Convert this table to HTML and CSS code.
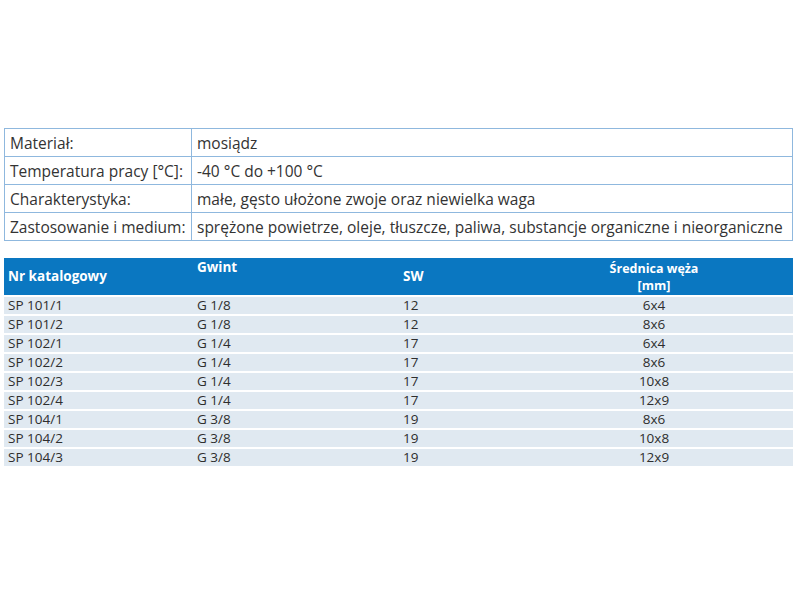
FILE: index.html
```html
<!DOCTYPE html>
<html lang="pl">
<head>
<meta charset="utf-8">
<link rel="stylesheet" href="styles.css">
</head>
<body>
<div class="page">
  <table class="spec">
    <tr><td class="label">Materiał:</td><td>mosiądz</td></tr>
    <tr><td class="label">Temperatura pracy [°C]:</td><td>-40 °C do +100 °C</td></tr>
    <tr><td class="label">Charakterystyka:</td><td>małe, gęsto ułożone zwoje oraz niewielka waga</td></tr>
    <tr><td class="label">Zastosowanie i medium:</td><td>sprężone powietrze, oleje, tłuszcze, paliwa, substancje organiczne i nieorganiczne</td></tr>
  </table>

  <table class="catalog">
    <thead>
      <tr>
        <th class="c1">Nr katalogowy</th>
        <th class="c2 top">Gwint</th>
        <th class="c3">SW</th>
        <th class="c4"><span class="line">Średnica węża</span><span class="line">[mm]</span></th>
      </tr>
    </thead>
    <tbody>
      <tr><td class="c1">SP 101/1</td><td class="c2">G 1/8</td><td class="c3">12</td><td class="c4">6x4</td></tr>
      <tr><td class="c1">SP 101/2</td><td class="c2">G 1/8</td><td class="c3">12</td><td class="c4">8x6</td></tr>
      <tr><td class="c1">SP 102/1</td><td class="c2">G 1/4</td><td class="c3">17</td><td class="c4">6x4</td></tr>
      <tr><td class="c1">SP 102/2</td><td class="c2">G 1/4</td><td class="c3">17</td><td class="c4">8x6</td></tr>
      <tr><td class="c1">SP 102/3</td><td class="c2">G 1/4</td><td class="c3">17</td><td class="c4">10x8</td></tr>
      <tr><td class="c1">SP 102/4</td><td class="c2">G 1/4</td><td class="c3">17</td><td class="c4">12x9</td></tr>
      <tr><td class="c1">SP 104/1</td><td class="c2">G 3/8</td><td class="c3">19</td><td class="c4">8x6</td></tr>
      <tr><td class="c1">SP 104/2</td><td class="c2">G 3/8</td><td class="c3">19</td><td class="c4">10x8</td></tr>
      <tr><td class="c1">SP 104/3</td><td class="c2">G 3/8</td><td class="c3">19</td><td class="c4">12x9</td></tr>
    </tbody>
  </table>
</div>
</body>
</html>
```

FILE: styles.css
```css
html, body {
  margin: 0;
  padding: 0;
  background: #ffffff;
}

body {
  font-family: "Open Sans", "Noto Sans", "Liberation Sans", sans-serif;
  color: #333333;
}

.page {
  padding: 128px 7px 0 4px;
}

table {
  border-collapse: collapse;
  width: 789px;
  table-layout: fixed;
}

.spec {
  border: 1px solid #8fb8de;
  font-size: 15.5px;
}

.spec td {
  border: 1px solid #8fb8de;
  height: 27px;
  padding: 0 5px;
  white-space: nowrap;
  vertical-align: middle;
}

.spec td.label {
  width: 176px;
}

.catalog {
  margin-top: 17px;
  font-size: 13.5px;
}

.catalog thead th {
  background: #0a77c1;
  color: #ffffff;
  font-weight: 700;
  height: 35px;
  padding: 0;
  vertical-align: middle;
  line-height: 15px;
  font-size: 13.5px;
}

.catalog thead th.top {
  vertical-align: top;
  padding-top: 2px;
}

.catalog thead th.c4 {
  padding-top: 0;
}

.catalog thead .line {
  display: block;
  line-height: 17px;
  font-size: 12.5px;
}

.catalog .c1 { width: 187px; text-align: left; padding-left: 4px; }
.catalog .c2 { width: 202px; text-align: left; padding-left: 2px; }
.catalog .c3 { width: 112px; text-align: left; padding-left: 4px; }
.catalog .c4 { width: 278px; text-align: center; }

.catalog tbody td {
  background: #e0e9f1;
  border-top: 2px solid #ffffff;
  height: 17px;
  line-height: 17px;
  padding-top: 0;
  padding-bottom: 0;
  white-space: nowrap;
  color: #2e2e2e;
}
```
